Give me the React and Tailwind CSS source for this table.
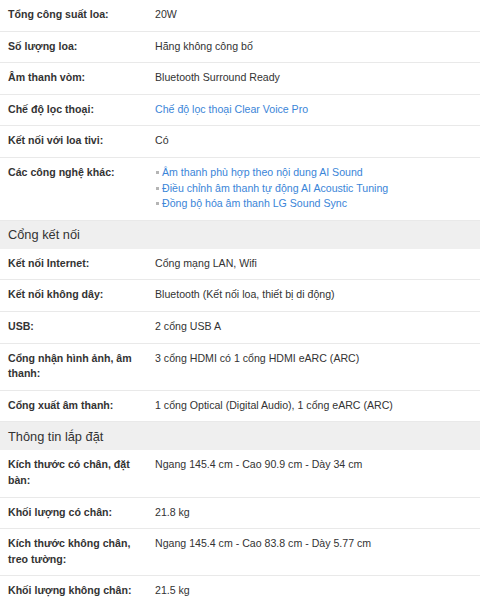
const GROUPS = [
  {
    rows: [
      { label: 'Tổng công suất loa:', value: '20W' },
      { label: 'Số lượng loa:', value: 'Hãng không công bố' },
      { label: 'Âm thanh vòm:', value: 'Bluetooth Surround Ready' },
      { label: 'Chế độ lọc thoại:', link: 'Chế độ lọc thoại Clear Voice Pro' },
      { label: 'Kết nối với loa tivi:', value: 'Có' },
      {
        label: 'Các công nghệ khác:',
        list: [
          'Âm thanh phù hợp theo nội dung AI Sound',
          'Điều chỉnh âm thanh tự động AI Acoustic Tuning',
          'Đồng bộ hóa âm thanh LG Sound Sync'
        ]
      }
    ]
  },
  {
    title: 'Cổng kết nối',
    rows: [
      { label: 'Kết nối Internet:', value: 'Cổng mạng LAN, Wifi' },
      { label: 'Kết nối không dây:', value: 'Bluetooth (Kết nối loa, thiết bị di động)' },
      { label: 'USB:', value: '2 cổng USB A' },
      { label: 'Cổng nhận hình ảnh, âm thanh:', value: '3 cổng HDMI có 1 cổng HDMI eARC (ARC)' },
      { label: 'Cổng xuất âm thanh:', value: '1 cổng Optical (Digital Audio), 1 cổng eARC (ARC)' }
    ]
  },
  {
    title: 'Thông tin lắp đặt',
    rows: [
      { label: 'Kích thước có chân, đặt bàn:', value: 'Ngang 145.4 cm - Cao 90.9 cm - Dày 34 cm' },
      { label: 'Khối lượng có chân:', value: '21.8 kg' },
      { label: 'Kích thước không chân, treo tường:', value: 'Ngang 145.4 cm - Cao 83.8 cm - Dày 5.77 cm' },
      { label: 'Khối lượng không chân:', value: '21.5 kg' }
    ]
  }
]

function SpecRow({ row }) {
  return (
    <div className="flex border-b border-[#e9e9e9] pt-[7px] pb-[8px] text-[10.6px] leading-[15.6px] text-[#333]">
      <div className="w-[155px] shrink-0 pl-[8px] pr-[18px] font-bold">{row.label}</div>
      <div className="flex-1 pr-[8px]">
        {row.value && <span>{row.value}</span>}
        {row.link && <a className="text-[#3a85d8]">{row.link}</a>}
        {row.list && (
          <ul>
            {row.list.map((item) => (
              <li key={item} className="flex items-center">
                <span className="mr-[3px] ml-[1px] h-[3px] w-[3px] bg-[#b5b5b5]"></span>
                <a className="text-[#3a85d8]">{item}</a>
              </li>
            ))}
          </ul>
        )}
      </div>
    </div>
  )
}

export default function App() {
  return (
    <div className="min-h-[604px] bg-white font-['Liberation_Sans',Arial,sans-serif]">
      <div className="w-[480px]">
        {GROUPS.map((group, i) => (
          <div key={i}>
            {group.title && (
              <div className="flex h-[28px] items-center bg-[#efefef] pl-[8px] text-[12.8px] text-[#333]">
                {group.title}
              </div>
            )}
            {group.rows.map((row) => (
              <SpecRow key={row.label} row={row} />
            ))}
          </div>
        ))}
      </div>
    </div>
  )
}
